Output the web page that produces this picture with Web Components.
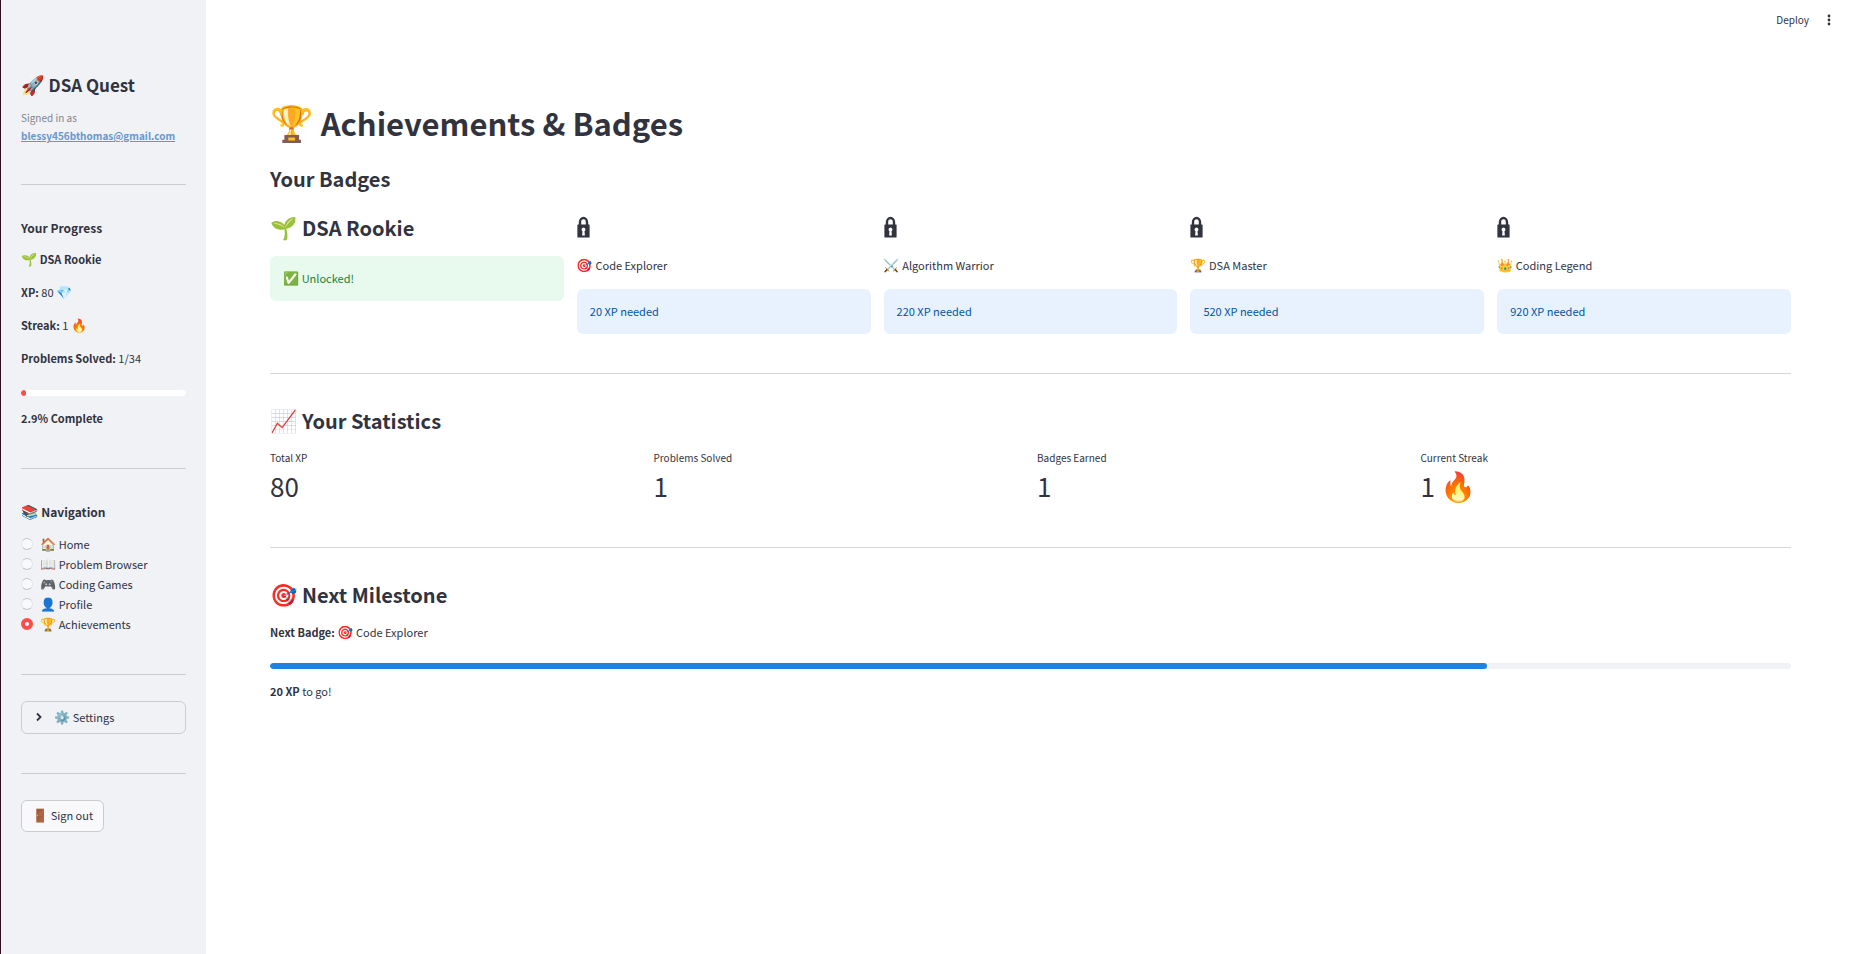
<!DOCTYPE html>
<html lang="en">
<head>
<meta charset="utf-8">
<meta name="viewport" content="width=device-width, initial-scale=1">
<title>DSA Quest - Achievements</title>
<style>
  :root {
    --text: #31333f;
    --muted: #83848c;
    --surface: #f0f2f6;
    --line: #d6d6d9;
    --line-dark: #caccd1;
    --primary: #ff4b4b;
    --blue: #1c83e1;
    --emoji: 13px;
  }

  body {
    margin: 0;
    background: #fff;
    color: var(--text);
    font: 400 11px/20px "Noto Sans CJK SC", "Open Sans", sans-serif;
  }
</style>
</head>
<body>
<quest-app>
  <quest-sidebar slot="sidebar"></quest-sidebar>
  <quest-toolbar slot="toolbar"></quest-toolbar>
  <achievements-page></achievements-page>
</quest-app>

<script>
/**
 * Shared base: attaches an open shadow root and fills it from render()
 */
class QuestElement extends HTMLElement {
  connectedCallback() {
    if (!this.shadowRoot) {
      this.attachShadow({ mode: 'open' });
    }
    this.shadowRoot.innerHTML = this.render().trim();
  }
}

/**
 * Two column frame with the toolbar over the top right corner
 */
class QuestApp extends QuestElement {
  render() {
    return `
      <style>
        :host {
          display: grid;
          grid-template-columns: 206px minmax(0, 1fr);
          min-height: 100vh;
          position: relative;
        }

        .toolbar {
          position: absolute;
          top: 0;
          right: 0;
        }

        main {
          padding: 102px 59px 80px 64px;
        }
      </style>
      <slot name="sidebar"></slot>
      <main><slot></slot></main>
      <div class="toolbar"><slot name="toolbar"></slot></div>
    `;
  }
}

/**
 * Emoji set a little larger than the text around it.
 * No whitespace around the slot, it would show up as a wide gap.
 */
class QuestEmoji extends QuestElement {
  render() {
    return `
      <style>
        :host {
          display: inline;
          font-family: "Noto Color Emoji", sans-serif;
          font-size: var(--emoji);
          font-weight: 400;
          line-height: 1;
        }
      </style><slot></slot>
    `;
  }
}

class QuestDivider extends QuestElement {
  render() {
    return `
      <style>
        :host { display: block; }

        hr {
          height: 1px;
          margin: 0;
          border: 0;
          background: var(--divider, var(--line));
        }
      </style>
      <hr>
    `;
  }
}

/**
 * Progress bar. Attributes: value (0-100), label
 */
class QuestProgress extends QuestElement {
  render() {
    const value = Number(this.getAttribute('value')) || 0;
    const label = this.getAttribute('label') || 'Progress';

    return `
      <style>
        :host { display: block; }

        .track {
          height: 6px;
          border-radius: 3px;
          background: var(--track, var(--surface));
          overflow: hidden;
        }

        .fill {
          width: ${value}%;
          height: 100%;
          border-radius: 3px;
          background: var(--fill, var(--blue));
        }
      </style>
      <div class="track" role="progressbar" aria-label="${label}"
        aria-valuenow="${value}" aria-valuemin="0" aria-valuemax="100">
        <div class="fill"></div>
      </div>
    `;
  }
}

/**
 * Radio list of the app's pages
 */
class QuestNav extends QuestElement {
  render() {
    const pages = [
      ['🏠', 'Home'],
      ['📖', 'Problem Browser'],
      ['🎮', 'Coding Games'],
      ['👤', 'Profile'],
      ['🏆', 'Achievements'],
    ];

    return `
      <style>
        :host { display: block; }

        fieldset {
          display: grid;
          margin: 0;
          padding: 0 0 1px;
          border: 0;
        }

        label {
          display: flex;
          align-items: center;
          gap: 7px;
          white-space: nowrap;
          cursor: pointer;
        }

        input {
          appearance: none;
          flex: none;
          box-sizing: border-box;
          width: 12px;
          height: 12px;
          margin: 0;
          border: 1px solid #c3c5ca;
          border-left-color: #e3e5e9;
          border-right-color: #e3e5e9;
          border-radius: 50%;
          background: #f9f9fb;
        }

        input:checked {
          border: 4px solid var(--primary);
          background: #fff;
        }
      </style>
      <fieldset aria-label="Navigation">
        ${pages
          .map(
            ([icon, name]) => `
          <label>
            <input type="radio" name="page" ${name === 'Achievements' ? 'checked' : ''}>
            <span><quest-emoji>${icon}</quest-emoji> ${name}</span>
          </label>
        `
          )
          .join('')}
      </fieldset>
    `;
  }
}

class QuestExpander extends QuestElement {
  render() {
    return `
      <style>
        :host { display: block; }

        details {
          border: 1px solid var(--line-dark);
          border-radius: 6px;
        }

        summary {
          display: flex;
          align-items: center;
          gap: 9px;
          padding: 5px 11px 6px;
          list-style: none;
          cursor: pointer;
        }

        summary::-webkit-details-marker { display: none; }

        svg { width: 12px; height: 12px; }

        details[open] svg { transform: rotate(90deg); }
      </style>
      <details>
        <summary>
          <svg viewBox="0 0 12 12" fill="none" stroke="currentColor" stroke-width="1.800" aria-hidden="true">
            <path d="M4 2.500 7.500 6 4 9.500"/>
          </svg>
          <span><slot></slot></span>
        </summary>
      </details>
    `;
  }
}

class QuestSidebar extends QuestElement {
  render() {
    return `
      <style>
        :host {
          display: block;
          box-sizing: border-box;
          padding: 73px 20px 40px;
          border-left: 1px solid #2a1020;
          background: var(--surface);
          --divider: var(--line-dark);
        }

        h1, h2, p { margin: 0; }

        h1 {
          font-size: 17px;
          line-height: 24px;
          font-weight: 700;
          --emoji: 19px;
        }

        h2 {
          font-size: 12px;
          font-weight: 700;
          --emoji: 14px;
        }

        b { font-weight: 700; }

        .account {
          margin-top: 12px;
          color: var(--muted);
          font-size: 10px;
          line-height: 18px;
        }

        .account a {
          color: #6698d0;
          font-weight: 700;
        }

        quest-divider { margin: 39px 0 33px; }
        quest-divider.tight { margin-bottom: 26px; }

        .progress {
          display: grid;
          gap: 13px;
          margin: 11px 0 22px;
        }

        .percent { padding-bottom: 1px; }

        quest-progress {
          margin-bottom: 12px;
          --track: #fff;
          --fill: var(--primary);
        }

        quest-nav { margin-top: 12px; }

        button {
          padding: 4px 10px 6px;
          border: 1px solid var(--line-dark);
          border-radius: 6px;
          background: #f9f9fb;
          color: inherit;
          font: inherit;
          cursor: pointer;
        }
      </style>
      <aside>
        <h1><quest-emoji>🚀</quest-emoji> DSA Quest</h1>
        <p class="account">Signed in as<br><a href="mailto:blessy456bthomas@gmail.com">blessy456bthomas@gmail.com</a></p>
        <quest-divider></quest-divider>

        <h2>Your Progress</h2>
        <div class="progress">
          <p><quest-emoji>🌱</quest-emoji> <b>DSA Rookie</b></p>
          <p><b>XP:</b> 80 <quest-emoji>💎</quest-emoji></p>
          <p><b>Streak:</b> 1 <quest-emoji>🔥</quest-emoji></p>
          <p><b>Problems Solved:</b> 1/34</p>
        </div>
        <quest-progress value="2.9" label="Problems solved"></quest-progress>
        <p class="percent"><b>2.9% Complete</b></p>
        <quest-divider></quest-divider>

        <h2><quest-emoji>📚</quest-emoji> Navigation</h2>
        <quest-nav></quest-nav>
        <quest-divider class="tight"></quest-divider>

        <quest-expander><quest-emoji>⚙️</quest-emoji> Settings</quest-expander>
        <quest-divider class="tight"></quest-divider>

        <button type="button"><quest-emoji>🚪</quest-emoji> Sign out</button>
      </aside>
    `;
  }
}

class QuestToolbar extends QuestElement {
  render() {
    return `
      <style>
        :host {
          display: flex;
          align-items: center;
          gap: 14px;
          padding: 10px 15px 0 0;
        }

        button {
          padding: 0;
          border: 0;
          background: none;
          color: inherit;
          font: inherit;
          font-size: 10px;
          cursor: pointer;
        }

        svg { display: block; width: 12px; height: 12px; }
      </style>
      <button type="button">Deploy</button>
      <button type="button" aria-label="Main menu">
        <svg viewBox="0 0 12 12" fill="currentColor" aria-hidden="true">
          <circle cx="6" cy="2" r="1.400"/>
          <circle cx="6" cy="6" r="1.400"/>
          <circle cx="6" cy="10" r="1.400"/>
        </svg>
      </button>
    `;
  }
}

/**
 * One badge column. Attributes: icon, name, needed (XP left, omitted once unlocked)
 */
class BadgeCard extends QuestElement {
  render() {
    const icon = this.getAttribute('icon');
    const name = this.getAttribute('name');
    const needed = this.getAttribute('needed');

    return `
      <style>
        :host {
          display: flex;
          flex-direction: column;
          gap: 13px;
        }

        h3, p { margin: 0; }

        h3 {
          height: 28px;
          font-size: 20px;
          line-height: 26px;
          font-weight: 700;
          --emoji: 22px;
        }

        svg {
          display: block;
          width: 13px;
          height: 28px;
        }

        .name {
          padding-bottom: 2px;
          line-height: 18px;
        }

        .note {
          padding: 12px 13px 13px;
          border-radius: 6px;
          background: #e8f2ff;
          color: #0054a3;
        }

        .note.unlocked {
          background: #e8f9ee;
          color: #158237;
        }
      </style>
      ${needed ? this._renderLocked(icon, name, needed) : this._renderUnlocked(icon, name)}
    `;
  }

  _renderUnlocked(icon, name) {
    return `
      <h3><quest-emoji>${icon}</quest-emoji> ${name}</h3>
      <p class="note unlocked" role="status"><quest-emoji>✅</quest-emoji> Unlocked!</p>
    `;
  }

  _renderLocked(icon, name, needed) {
    return `
      <h3>
        <svg viewBox="0 0 13 28" role="img" aria-label="Locked">
          <path d="M3 11V7a3.500 4 0 0 1 7 0V11" fill="none" stroke="currentColor" stroke-width="2.400"/>
          <path fill="currentColor" fill-rule="evenodd" d="M1 9.500h11q.600 0 .600.600v11.900q0 .600-.600.600H1q-.600 0-.600-.600V10.100q0-.600.600-.600zM6.500 12.500a2 2 0 0 0-1 3.700l-.400 4.400h2.800l-.400-4.400a2 2 0 0 0-1-3.700z"/>
        </svg>
      </h3>
      <p class="name"><quest-emoji>${icon}</quest-emoji> ${name}</p>
      <p class="note">${needed} XP needed</p>
    `;
  }
}

/**
 * Label with a large value below, passed in as content
 */
class StatMetric extends QuestElement {
  render() {
    return `
      <style>
        :host { display: block; }

        .label {
          font-size: 10px;
          line-height: 18px;
        }

        .value {
          font-size: 26px;
          line-height: 38px;
          --emoji: 29px;
        }
      </style>
      <div class="label">${this.getAttribute('label')}</div>
      <div class="value"><slot></slot></div>
    `;
  }
}

class AchievementsPage extends QuestElement {
  render() {
    return `
      <style>
        :host { display: block; }

        h1, h2, p { margin: 0; }

        h1 {
          font-size: 31px;
          line-height: 42px;
          font-weight: 700;
          --emoji: 35px;
        }

        h2 {
          font-size: 20px;
          line-height: 28px;
          font-weight: 700;
          --emoji: 22px;
        }

        b { font-weight: 700; }

        .badges, .stats {
          display: grid;
          gap: 13px;
        }

        .badges {
          grid-template-columns: repeat(5, minmax(0, 1fr));
          margin-top: 22px;
        }

        .stats {
          grid-template-columns: repeat(4, minmax(0, 1fr));
          margin-top: 14px;
          padding-bottom: 3px;
        }

        h1 + h2 { margin-top: 21px; }
        h2 + p { margin-top: 13px; }

        quest-divider { margin: 39px 0 33px; }
        quest-progress { margin: 21px 0 12px; }
      </style>
      <h1><quest-emoji>🏆</quest-emoji> Achievements &amp; Badges</h1>
      <h2>Your Badges</h2>
      <div class="badges">
        <badge-card icon="🌱" name="DSA Rookie"></badge-card>
        <badge-card icon="🎯" name="Code Explorer" needed="20"></badge-card>
        <badge-card icon="⚔️" name="Algorithm Warrior" needed="220"></badge-card>
        <badge-card icon="🏆" name="DSA Master" needed="520"></badge-card>
        <badge-card icon="👑" name="Coding Legend" needed="920"></badge-card>
      </div>
      <quest-divider></quest-divider>

      <h2><quest-emoji>📈</quest-emoji> Your Statistics</h2>
      <div class="stats">
        <stat-metric label="Total XP">80</stat-metric>
        <stat-metric label="Problems Solved">1</stat-metric>
        <stat-metric label="Badges Earned">1</stat-metric>
        <stat-metric label="Current Streak">1 <quest-emoji>🔥</quest-emoji></stat-metric>
      </div>
      <quest-divider></quest-divider>

      <h2><quest-emoji>🎯</quest-emoji> Next Milestone</h2>
      <p><b>Next Badge:</b> <quest-emoji>🎯</quest-emoji> Code Explorer</p>
      <quest-progress value="80" label="Next badge"></quest-progress>
      <p><b>20 XP</b> to go!</p>
    `;
  }
}

customElements.define('quest-emoji', QuestEmoji);
customElements.define('quest-divider', QuestDivider);
customElements.define('quest-progress', QuestProgress);
customElements.define('quest-nav', QuestNav);
customElements.define('quest-expander', QuestExpander);
customElements.define('quest-sidebar', QuestSidebar);
customElements.define('quest-toolbar', QuestToolbar);
customElements.define('badge-card', BadgeCard);
customElements.define('stat-metric', StatMetric);
customElements.define('achievements-page', AchievementsPage);
customElements.define('quest-app', QuestApp);
</script>
</body>
</html>
